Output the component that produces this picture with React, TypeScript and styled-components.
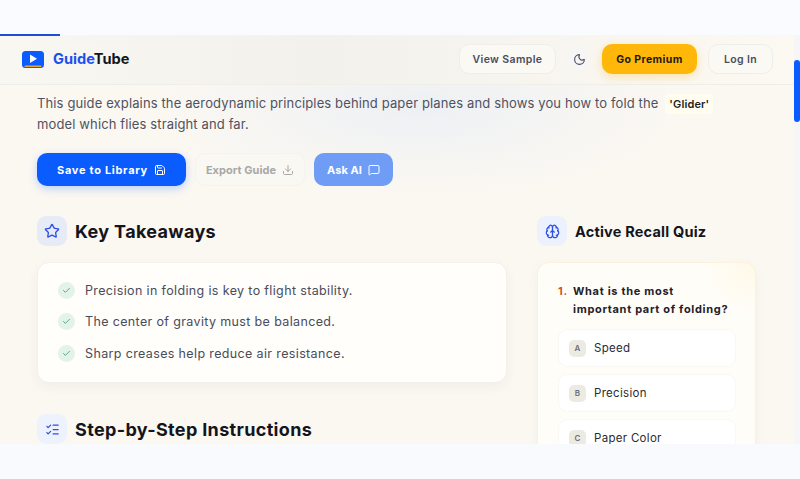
import styled, { createGlobalStyle } from "styled-components";
import { Check, Download, ListChecks, MessageSquare, Moon, Save, Star, Brain } from "lucide-react";

const GlobalStyle = createGlobalStyle`
  html, body {
    margin: 0;
    padding: 0;
    height: 100%;
    overflow: hidden;
    background: #f8fafd;
  }
  * { box-sizing: border-box; }
  body {
    font-family: Inter, "Noto Sans", sans-serif;
    color: #14151c;
  }
`;

const Page = styled.div`
  width: 800px;
  height: 479px;
  display: flex;
  flex-direction: column;
  background: #f8fafd;
  position: relative;
`;

const TopStrip = styled.div`
  height: 35px;
  flex-shrink: 0;
  background: #f9fbfe;
`;

const Progress = styled.div`
  position: absolute;
  top: 34px;
  left: 0;
  width: 60px;
  height: 2px;
  background: #1d4ed8;
  z-index: 3;
`;

const Frame = styled.div`
  height: 409px;
  flex-shrink: 0;
  position: relative;
  overflow: hidden;
  display: flex;
  flex-direction: column;
  background:
    radial-gradient(ellipse 260px 90px at 420px 70px, #edf0f4 0%, rgba(237, 240, 244, 0) 100%),
    #fbf8f2;
`;

const Header = styled.header`
  height: 50px;
  flex-shrink: 0;
  display: flex;
  align-items: center;
  padding: 0 27px 1px 22px;
  gap: 11px;
  border-bottom: 1px solid #f0eee9;
  background: linear-gradient(90deg, #f9f7f2 0%, #f2f1ec 40%, #f6f4ee 60%, #fcf9f2 100%);
`;

const Logo = styled.div`
  display: flex;
  align-items: center;
  gap: 9px;
  margin-right: auto;
`;

const Wordmark = styled.span`
  font-size: 14.6px;
  font-weight: 700;
  color: #14151c;
`;

const Accent = styled.span`
  color: #1d4ff0;
`;

const GhostButton = styled.button<{ $width: number }>`
  width: ${(p) => p.$width}px;
  height: 30px;
  padding: 0;
  border: 1px solid #f0eeea;
  border-radius: 10px;
  background: #fbf9f4;
  color: #4a4c5c;
  font-family: inherit;
  font-size: 10.5px;
  font-weight: 600;
  letter-spacing: 0.38px;
`;

const ThemeToggle = styled.button`
  width: 22px;
  height: 22px;
  margin: 0 1px 0 1px;
  padding: 0;
  border: none;
  border-radius: 50%;
  background: #f6f6f6;
  color: #4a4c5c;
  display: flex;
  align-items: center;
  justify-content: center;
`;

const PremiumButton = styled.button`
  width: 95px;
  height: 30px;
  padding: 0;
  border: none;
  border-radius: 10px;
  background: #ffb70a;
  color: #1d1a10;
  font-family: inherit;
  font-size: 10.5px;
  font-weight: 700;
  letter-spacing: 0.4px;
  box-shadow: 0 3px 8px rgba(255, 183, 10, 0.3);
`;

const Content = styled.main`
  flex: 1;
  min-height: 0;
  padding: 8px 38px 0 37px;
`;

const Intro = styled.p`
  margin: 0;
  width: 680px;
  font-size: 13px;
  line-height: 20px;
  letter-spacing: 0.13px;
  color: #50525f;
`;

const Code = styled.span`
  display: inline-block;
  margin-left: 3px;
  padding: 0 4px;
  background: #fffdf0;
  border-radius: 3px;
  color: #1c1d25;
  font-size: 11px;
  font-weight: 600;
`;

const Actions = styled.div`
  display: flex;
  gap: 9px;
  margin-top: 19px;
`;

const Action = styled.button<{ $kind: "primary" | "muted" | "soft" }>`
  height: 33px;
  display: flex;
  align-items: center;
  justify-content: center;
  gap: 6px;
  padding: 0;
  border-radius: 10px;
  font-family: inherit;
  font-size: 11px;
  font-weight: 700;
  letter-spacing: ${(p) => (p.$kind === "primary" ? "0.7px" : "0.05px")};
  border: ${(p) => (p.$kind === "muted" ? "1px solid #f5f3ee" : "none")};
  width: ${(p) => (p.$kind === "primary" ? "149px" : p.$kind === "muted" ? "110px" : "79px")};
  background: ${(p) =>
    p.$kind === "primary" ? "#0a5cff" : p.$kind === "muted" ? "#faf8f3" : "#6f9df5"};
  color: ${(p) => (p.$kind === "muted" ? "#a8a8a6" : "#fff")};
  box-shadow: ${(p) =>
    p.$kind === "primary" ? "0 3px 8px rgba(10, 92, 255, 0.25)" : "none"};
`;

const Columns = styled.div`
  display: grid;
  grid-template-columns: 470px 219px;
  gap: 30px;
  margin-top: 30px;
`;

const SectionHead = styled.div`
  display: flex;
  align-items: center;
  gap: 8px;
`;

const IconTile = styled.div<{ $tint: string }>`
  width: 30px;
  height: 30px;
  flex-shrink: 0;
  border-radius: 9px;
  background: ${(p) => p.$tint};
  color: #2b4fe8;
  display: flex;
  align-items: center;
  justify-content: center;
`;

const SectionTitle = styled.h2<{ $small?: boolean }>`
  margin: 0;
  font-size: ${(p) => (p.$small ? "14.5px" : "18px")};
  font-weight: 700;
  color: #14151c;
  letter-spacing: ${(p) => (p.$small ? "0.2px" : "0.34px")};
`;

const TakeawayCard = styled.div`
  margin-top: 16px;
  height: 121px;
  padding: 18px 20px;
  border: 1px solid #f3f1ec;
  border-radius: 12px;
  background: #fffefa;
  box-shadow: 0 4px 12px rgba(60, 50, 20, 0.05);
  display: flex;
  flex-direction: column;
  gap: 13.5px;
`;

const Takeaway = styled.div`
  display: flex;
  align-items: center;
  gap: 10px;
  height: 18px;
  font-size: 12.5px;
  letter-spacing: 0.36px;
  color: #4a4c5a;
`;

const CheckDot = styled.span`
  width: 17px;
  height: 17px;
  border-radius: 50%;
  background: #e3f3e9;
  color: #3f8a5f;
  display: flex;
  align-items: center;
  justify-content: center;
`;

const StepsHead = styled(SectionHead)`
  margin-top: 31px;
`;

const QuizCard = styled.div`
  margin-top: 16px;
  height: 260px;
  padding: 20px 20px 0;
  border: 1px solid #fbf2dc;
  border-radius: 12px;
  background: radial-gradient(circle 50px at 100% 0, #fff9e6 0%, rgba(255, 249, 230, 0) 100%), #fffdf8;
  box-shadow: 0 4px 12px rgba(120, 90, 20, 0.05);
`;

const Question = styled.div`
  display: grid;
  grid-template-columns: 15px 1fr;
  font-size: 11px;
  font-weight: 700;
  line-height: 17.5px;
  letter-spacing: 0.68px;
  color: #1f202a;
`;

const QuestionNumber = styled.span`
  color: #c7582a;
`;

const Options = styled.div`
  margin-top: 11px;
  margin-right: -1px;
  display: flex;
  flex-direction: column;
  gap: 7px;
`;

const Option = styled.div`
  height: 38px;
  padding: 0 10px;
  border: 1px solid #faf8f2;
  border-radius: 9px;
  background: #fff;
  display: flex;
  align-items: center;
  gap: 8px;
  font-size: 11.5px;
  letter-spacing: 0.3px;
  color: #2a2b35;
`;

const OptionKey = styled.span`
  width: 17px;
  height: 17px;
  border-radius: 5px;
  background: #ecebe2;
  color: #6c6e80;
  font-size: 8px;
  font-weight: 600;
  display: flex;
  align-items: center;
  justify-content: center;
`;

const ScrollTrack = styled.div`
  position: absolute;
  top: 0;
  right: 0;
  bottom: 0;
  width: 6px;
  background: #f6f6f6;
`;

const ScrollThumb = styled.div`
  margin-top: 25px;
  height: 62px;
  border-radius: 3px;
  background: #0a5cff;
`;

const takeaways = [
  "Precision in folding is key to flight stability.",
  "The center of gravity must be balanced.",
  "Sharp creases help reduce air resistance.",
];

const quizOptions = [
  { key: "A", label: "Speed" },
  { key: "B", label: "Precision" },
  { key: "C", label: "Paper Color" },
];

function LogoMark() {
  return (
    <svg width="22" height="17" viewBox="0 0 22 17" aria-hidden="true">
      <rect width="22" height="17" rx="3.5" fill="#0a5cff" />
      <path d="M8 3.6 15 7.8 8 12Z" fill="#fff" />
      <rect x="2.5" y="14.6" width="17" height="1.4" rx="0.7" fill="#e9a23b" />
    </svg>
  );
}

export default function App() {
  return (
    <Page>
      <GlobalStyle />
      <TopStrip />
      <Progress />
      <Frame>
        <Header>
          <Logo>
            <LogoMark />
            <Wordmark>
              <Accent>Guide</Accent>Tube
            </Wordmark>
          </Logo>
          <GhostButton $width={97}>View Sample</GhostButton>
          <ThemeToggle aria-label="Toggle theme">
            <Moon size={13} />
          </ThemeToggle>
          <PremiumButton>Go Premium</PremiumButton>
          <GhostButton $width={65}>Log In</GhostButton>
        </Header>
        <Content>
          <Intro>
            This guide explains the aerodynamic principles behind paper planes and shows you how to fold the <Code>'Glider'</Code> model which flies straight and far.
          </Intro>
          <Actions>
            <Action $kind="primary">
              Save to Library <Save size={12} />
            </Action>
            <Action $kind="muted">
              Export Guide <Download size={12} />
            </Action>
            <Action $kind="soft">
              Ask AI <MessageSquare size={12} />
            </Action>
          </Actions>
          <Columns>
            <section>
              <SectionHead>
                <IconTile $tint="#e6ebf5">
                  <Star size={16} />
                </IconTile>
                <SectionTitle>Key Takeaways</SectionTitle>
              </SectionHead>
              <TakeawayCard>
                {takeaways.map((text) => (
                  <Takeaway key={text}>
                    <CheckDot>
                      <Check size={9} />
                    </CheckDot>
                    {text}
                  </Takeaway>
                ))}
              </TakeawayCard>
              <StepsHead>
                <IconTile $tint="#edf2fd">
                  <ListChecks size={15} />
                </IconTile>
                <SectionTitle>Step-by-Step Instructions</SectionTitle>
              </StepsHead>
            </section>
            <section>
              <SectionHead>
                <IconTile $tint="#ebf1fd">
                  <Brain size={15} />
                </IconTile>
                <SectionTitle $small>Active Recall Quiz</SectionTitle>
              </SectionHead>
              <QuizCard>
                <Question>
                  <QuestionNumber>1.</QuestionNumber>
                  <span>
                    What is the most
                    <br />
                    important part of folding?
                  </span>
                </Question>
                <Options>
                  {quizOptions.map((option) => (
                    <Option key={option.key}>
                      <OptionKey>{option.key}</OptionKey>
                      {option.label}
                    </Option>
                  ))}
                </Options>
              </QuizCard>
            </section>
          </Columns>
        </Content>
        <ScrollTrack>
          <ScrollThumb />
        </ScrollTrack>
      </Frame>
    </Page>
  );
}
